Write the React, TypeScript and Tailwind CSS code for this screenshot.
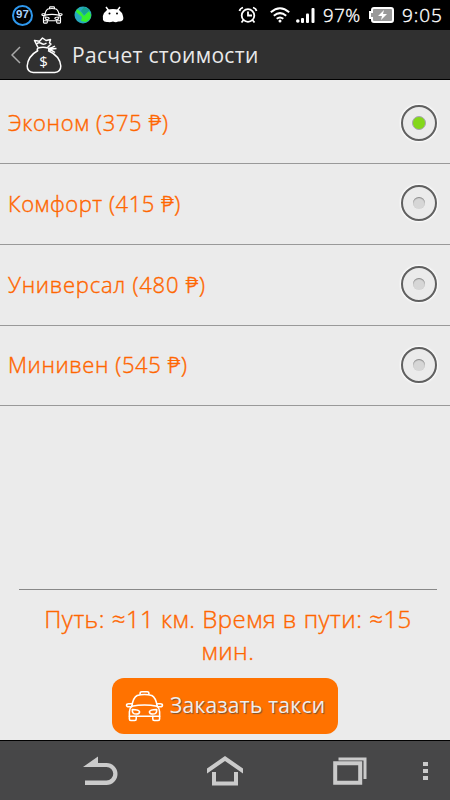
import React, { useState } from 'react';

const tariffs = [
  { name: 'Эконом', price: 375, height: 'h-[84px] pt-[2px]', tracking: 'tracking-[0.65px]' },
  { name: 'Комфорт', price: 415, height: 'h-[81px] pb-[2px]', tracking: 'tracking-[0.55px]' },
  { name: 'Универсал', price: 480, height: 'h-[81px] pb-[2px]', tracking: 'tracking-[0.75px]' },
  { name: 'Минивен', price: 545, height: 'h-[80px] pb-[2px]', tracking: 'tracking-[0.6px]' },
];

const TaxiIcon = ({ className, strokeWidth = 1.6 }: { className?: string; strokeWidth?: number }) => (
  <svg viewBox="0 0 40 32" fill="none" stroke="currentColor" strokeWidth={strokeWidth} strokeLinejoin="round" strokeLinecap="round" className={className}>
    <path d="M15.500 4V2.600Q15.500 1.300 17 1.300h6q1.500 0 1.500 1.300V4" />
    <path d="M7 16C8 10 10 6.500 12.500 5.200q7.500-2 15 0C30 6.500 32 10 33 16" />
    <path d="M7 16.200q13-2.600 26 0" />
    <path d="M7.500 13.600H3.800q-2.200 0-2.200 1.600T3.800 16.800H7M32.500 13.600h3.700q2.200 0 2.200 1.600t-2.200 1.600H33" />
    <path d="M7 16q-2.500 2.500-2.500 6v4.500h31V22q0-3.500-2.500-6" />
    <path d="M4.500 26.500v2.800q0 1.500 1.500 1.500h4q1.500 0 1.500-1.500v-2.800M28.500 26.500v2.800q0 1.500 1.500 1.500h4q1.500 0 1.500-1.500v-2.800" />
    <path d="M7.500 19.500q7 .2 7.500 2.500-.3 2.300-3.500 2.300-4.500 0-4-4.800ZM32.500 19.500q-7 .2-7.500 2.500.3 2.300 3.500 2.300 4.500 0 4-4.800Z" />
  </svg>
);

const StatusBar = () => (
  <div className="flex h-[30px] shrink-0 items-center bg-black text-white">
    <div className="ml-[12px] flex size-[21px] items-center justify-center rounded-full border-2 border-[#2e98ee] font-['Liberation_Sans',sans-serif] text-[11.500px] font-bold text-[#a9d4ff]">97</div>
    <TaxiIcon className="ml-[8px] h-[18px] w-[22px]" strokeWidth={2} />
    <svg viewBox="0 0 18 18" className="ml-[11px] size-[18px]">
      <circle cx="9" cy="9" r="8.500" fill="#27a9bd" />
      <path d="M3 3 7 6l3 4 5-5 2 4-1 4-4 3-5-1 1-4-6-5Z" fill="#35f02c" />
      <path d="m10 1 6 3-6 5-3-4Z" fill="#16a48f" />
    </svg>
    <svg viewBox="0 0 22 18" className="ml-[10px] h-[18px] w-[22px]" fill="white">
      <path d="m4 1 3 4M18 1l-3 4" stroke="white" strokeWidth="1.500" />
      <path d="M5 4q6-2 12 0l3 3q2 5 1 7-2 2-5 1.500-2 1.500-5 0-3 1-5 .5-4 .5-5-2Q0 10 2 7Z" />
      <circle cx="7.500" cy="7.500" r="1" fill="black" />
      <circle cx="15" cy="7.500" r="1" fill="black" />
    </svg>
    <svg viewBox="0 0 20 18" className="ml-[114px] h-[18px] w-[20px]" fill="none" stroke="white" strokeWidth="1.800">
      <circle cx="10" cy="9.500" r="6.300" />
      <path d="M10 5.500v4h4M1.500 5q.5-2.500 3.500-3.500M18.500 5Q18 2.500 15 1.500M5.500 14l-2 2.500M14.500 14l2 2.500" />
    </svg>
    <svg viewBox="0 0 20 16" className="ml-[12px] h-[16px] w-[20px]" fill="none" stroke="white" strokeWidth="2">
      <path d="M.8 5.300q9.200-8 18.400 0M3.800 8.700q6.200-5.200 12.400 0M6.700 11.800q3.300-2.600 6.600 0" />
      <circle cx="10" cy="14" r="1.500" fill="white" stroke="none" />
    </svg>
    <svg viewBox="0 0 19 15" className="ml-[6px] h-[15px] w-[19px]" fill="white">
      <circle cx="1.800" cy="13" r="1.800" />
      <rect x="5" y="10" width="3" height="5" rx="1" />
      <rect x="10" y="5.500" width="3" height="9.500" rx="1" />
      <rect x="15.500" y="0" width="3" height="15" rx="1" />
    </svg>
    <span className="ml-[8px] w-[41px] text-[18.500px] leading-[30px] tracking-[0.6px] [-webkit-text-stroke:0.35px]">97%</span>
    <svg viewBox="0 0 25 16" className="ml-[5px] h-[16px] w-[25px]">
      <path d="M5 1h17q2 0 2 2v10q0 2-2 2H5q-2 0-2-2v-2H1V5h2V3q0-2 2-2Z" fill="#999" stroke="white" strokeWidth="2" />
      <path d="M15 3 9 9h4l-1 4 6-6h-4Z" fill="white" />
    </svg>
    <span className="ml-[8px] text-[19px] leading-[30px] tracking-[0.9px] [-webkit-text-stroke:0.35px]">9:05</span>
  </div>
);

const Header = () => (
  <div className="flex h-[50px] shrink-0 items-center border-b border-black bg-[#303030] text-[#e9e9e9]">
    <svg viewBox="0 0 10 18" className="ml-[11px] h-[18px] w-[10px]" fill="none" stroke="#aaa" strokeWidth="1.500">
      <path d="M9 1 1 9l8 8" />
    </svg>
    <svg viewBox="0 0 36 40" className="ml-[5px] h-[40px] w-[36px]" fill="none" stroke="white" strokeWidth="1.500" strokeLinejoin="round">
      <path d="M12 12.500 8.500 5.500l5 .8L16.500 3l3.500 2.500 4.500-1-1 3.500 1.500 1-3.500 3.500" />
      <path d="M10.500 9q2.500-2 5-.5t5-.5" />
      <path d="M12 13q5-1.500 10 0M12 13q-1.500 1.500 0 3M22 13.500q4-.5 7-2.500M22 14q4 0 8.500-.500M22 14.500q4 .5 7 3" />
      <path d="M12 15.500Q2 21 1.200 31q0 6 6 6.500h21.600q6-.5 6-6.500Q34 21 22 15.500" />
      <text x="17.500" y="32" textAnchor="middle" fill="white" stroke="none" fontSize="15" fontWeight="500">$</text>
    </svg>
    <span className="ml-[10px] text-[21px] leading-[28px] font-normal tracking-[0.320px]">Расчет стоимости</span>
  </div>
);

const Radio = ({ checked }: { checked: boolean }) => (
  <span className="flex size-[36px] items-center justify-center rounded-full border-2 border-[#606060] shadow-[0_0_2px_1px_#fff]">
    {checked ? (
      <span className="size-[14px] rounded-full border border-[#a9a2b5] bg-[#83d71a]" />
    ) : (
      <span className="size-[12px] rounded-full bg-[#d6d6d6] shadow-[inset_0_1px_1px_#888]" />
    )}
  </span>
);

const NavBar = () => (
  <div className="flex h-[60px] shrink-0 items-center border-t border-black bg-[#474748] text-[#cbcbcb]">
    <svg viewBox="0 0 36 30" className="ml-[83px] h-[30px] w-[36px]" fill="currentColor">
      <path d="M0 11 15 .5V7h8.500a11 11 0 0 1 0 22H2v-4.500h21.500a6.700 6.700 0 0 0 0-13.500Z" />
    </svg>
    <svg viewBox="0 0 36 30" className="ml-[88px] h-[30px] w-[36px]" fill="none" stroke="currentColor" strokeWidth="4">
      <path d="M0 12.500 18 0l18 12.500v5L18 5 0 17.500Z" fill="currentColor" stroke="none" />
      <path d="M7 16v11.500h22V16" />
    </svg>
    <svg viewBox="0 0 34 28" className="ml-[90px] h-[28px] w-[34px]" fill="none" stroke="currentColor">
      <path d="M5.500 2H32v20" strokeWidth="3" />
      <path d="M2.200 6.200h25v19.500h-25Z" strokeWidth="4" />
    </svg>
    <svg viewBox="0 0 5 18" className="ml-[56px] h-[18px] w-[5px]" fill="currentColor">
      <path d="M0 0h5v4H0ZM0 7h5v4H0ZM0 14h5v4H0Z" />
    </svg>
  </div>
);

const App = () => {
  const [selected, setSelected] = useState(0);

  return (
    <div className="flex h-[800px] w-[450px] flex-col overflow-hidden bg-[#ebebeb] font-['Open_Sans','Noto_Sans',sans-serif] font-light">
      <StatusBar />
      <Header />
      <main className="flex flex-1 flex-col text-[#ff6600]">
        {tariffs.map((tariff, index) => (
          <button
            key={tariff.name}
            onClick={() => setSelected(index)}
            className={`${tariff.height} flex items-center justify-between border-b border-[#999] pr-[13px] pl-[8px] text-[22px]`}
          >
            <span className={`${tariff.tracking} [-webkit-text-stroke:0.4px]`}>{tariff.name} ({tariff.price} ₱)</span>
            <Radio checked={index === selected} />
          </button>
        ))}
        <div className="mt-auto mr-[13px] ml-[19px] border-t border-[#888] px-4 pt-[13px] text-center text-[24px] leading-[31.500px] tracking-[0.5px] [-webkit-text-stroke:0.4px]">
          Путь: ≈11 км. Время в пути: ≈15 мин.
        </div>
        <button className="mx-auto mt-[12px] mb-[6px] flex h-[56px] w-[226px] shrink-0 items-center rounded-[12px] bg-[#ff7200] pl-[13px] text-[21px] font-normal tracking-[0.250px] text-[#eee] [text-shadow:1px_1px_1px_#7a5030]">
          <TaxiIcon className="h-[32px] w-[39px] text-white" />
          <span className="ml-[6px]">Заказать такси</span>
        </button>
      </main>
      <NavBar />
    </div>
  );
};

export default App;
